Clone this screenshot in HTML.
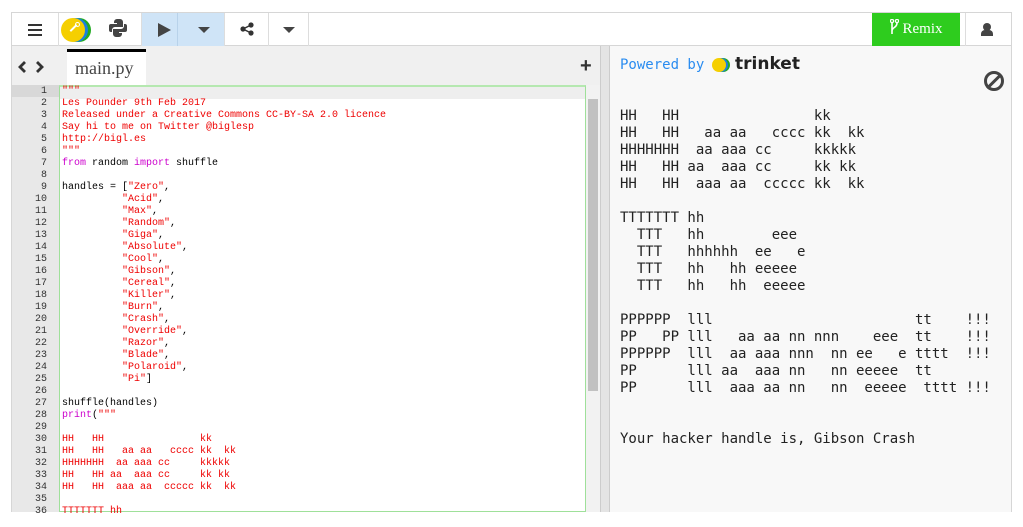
<!DOCTYPE html>
<html><head><meta charset="utf-8">
<style>
*{margin:0;padding:0;box-sizing:border-box}
body{width:1023px;height:527px;background:#fff;position:relative;overflow:hidden;font-family:"Liberation Sans",sans-serif}
.frame{position:absolute;left:11px;top:12px;width:1001px;height:500px;border:1px solid #d6d6d6}
.tb{position:absolute;left:0;top:0;width:999px;height:33px;border-bottom:1px solid #d6d6d6;background:#fff}
.tb .b{position:absolute;top:0;height:33px;border-right:1px solid #ddd}
.tabbar{position:absolute;left:0;top:33px;width:588px;height:39px;background:#f0f0f0}
.gut{position:absolute;left:0;top:72px;width:47px;height:427px;background:#e8e8e8}
.code{position:absolute;left:47px;top:72px;width:527px;height:427px;border:1px solid #9fe09a;border-top:2px solid #b5e8b0;background:#fff;overflow:hidden}
.ln{position:absolute;left:0;top:73px;width:35px;font:10px/12px "Liberation Mono",monospace;color:#333;text-align:right;white-space:pre}
.src{position:absolute;left:50px;top:73px;font:10px/12px "Liberation Mono",monospace;white-space:pre;color:#000}
.s{color:#e00}.k{color:#c0c}
.sb{position:absolute;left:574px;top:72px;width:14px;height:427px;background:#f2f2f2}
.split{position:absolute;left:588px;top:33px;width:10px;height:466px;background:#e4e4e4;border-left:1px solid #ccc;border-right:1px solid #ccc}
.out{position:absolute;left:598px;top:33px;width:401px;height:466px;background:#f8f8f8}
.o{position:absolute;left:10px;top:62px;font:14px/17px "DejaVu Sans Mono",monospace;white-space:pre;color:#222}
</style></head><body>
<div class="frame">
<div class="tb">
 <div class="b" style="left:0;width:47px"><div style="position:absolute;left:16px;top:11px;width:14px;height:2px;background:#333;box-shadow:0 5px #333,0 10px #333"></div></div>
 <div class="b" style="left:47px;width:83px">
  <div style="position:absolute;left:8px;top:5px;width:24px;height:24px;border-radius:50%;background:#2a2"></div>
  <div style="position:absolute;left:5px;top:5px;width:24px;height:24px;border-radius:50%;background:#1a7fe0"></div>
  <div style="position:absolute;left:2px;top:5px;width:24px;height:24px;border-radius:50%;background:#f5cf00"></div>
  <div style="position:absolute;left:10px;top:14px;width:9px;height:2px;background:#fff;transform:rotate(-45deg)"></div>
  <div style="position:absolute;left:16px;top:9px;width:5px;height:5px;border:1.5px solid #fff;border-radius:50%"></div>
  <svg style="position:absolute;left:49px;top:5px" width="20" height="20" viewBox="0 0 20 20"><path d="M9 1h3a3 3 0 0 1 3 3v5H7a3 3 0 0 0-3 3v2H3a2 2 0 0 1-2-2V8a2 2 0 0 1 2-2h6V5H6V4a3 3 0 0 1 3-3z" fill="#444"/><path d="M11 19H8a3 3 0 0 1-3-3v-5h8a3 3 0 0 0 3-3V6h1a2 2 0 0 1 2 2v4a2 2 0 0 1-2 2h-6v1h3v1a3 3 0 0 1-3 3z" fill="#444"/></svg>
 </div>
 <div class="b" style="left:130px;width:83px;background:#cfe4f7"><div style="position:absolute;left:16px;top:10px;border-left:13px solid #444;border-top:7px solid transparent;border-bottom:7px solid transparent"></div><div style="position:absolute;left:35px;top:0;width:1px;height:33px;background:#b8d2ea"></div><div style="position:absolute;left:56px;top:14px;border-top:6px solid #444;border-left:6px solid transparent;border-right:6px solid transparent"></div></div>
 <div class="b" style="left:213px;width:44px"><svg style="position:absolute;left:15px;top:9px" width="14" height="14"><circle cx="11" cy="3" r="2.6" fill="#333"/><circle cx="3" cy="7" r="2.6" fill="#333"/><circle cx="11" cy="11" r="2.6" fill="#333"/><path d="M11 3L3 7L11 11" stroke="#333" stroke-width="1.5" fill="none"/></svg></div>
 <div class="b" style="left:257px;width:40px"><div style="position:absolute;left:14px;top:14px;border-top:6px solid #444;border-left:6px solid transparent;border-right:6px solid transparent"></div></div>
 <div style="position:absolute;left:860px;top:0;width:88px;height:33px;background:#2ecc1e;color:#fff;font:15px/33px 'Liberation Serif',serif;text-align:center"><svg width="9" height="16" style="vertical-align:-2px;margin-right:4px"><circle cx="2" cy="2" r="1.6" fill="none" stroke="#fff" stroke-width="1.3"/><circle cx="7" cy="2" r="1.6" fill="none" stroke="#fff" stroke-width="1.3"/><path d="M2 4v11M7 4c0 5-5 4-5 8" stroke="#fff" stroke-width="1.6" fill="none"/></svg>Remix</div>
 <div style="position:absolute;left:953px;top:0;width:46px;height:33px;border-left:1px solid #ddd"><div style="position:absolute;left:17px;top:10px;width:8px;height:8px;border-radius:50%;background:#444"></div><div style="position:absolute;left:15px;top:17px;width:12px;height:6px;border-radius:4px 4px 0 0;background:#444"></div></div>
</div>
<div class="tabbar">
 <svg style="position:absolute;left:5px;top:14px" width="30" height="14"><path d="M8 2L3 7L8 12M20 2L25 7L20 12" stroke="#333" stroke-width="2.8" fill="none"/></svg>
 <div style="position:absolute;left:55px;top:3px;width:79px;height:36px;background:#fff;border-top:3px solid #000;font:18px/32px 'Liberation Serif',serif;color:#444;padding-left:8px">main.py</div>
 <div style="position:absolute;left:568px;top:10px;font:bold 20px/20px 'Liberation Sans';color:#333">+</div>
</div>
<div class="gut"></div>
<div style="position:absolute;left:0;top:72px;width:47px;height:12px;background:#d8d8d8"></div>
<div class="code"><div style="position:absolute;left:0;top:0;width:527px;height:12px;background:#eee"></div></div>
<div class="ln">1
2
3
4
5
6
7
8
9
10
11
12
13
14
15
16
17
18
19
20
21
22
23
24
25
26
27
28
29
30
31
32
33
34
35
36</div>
<div class="src"><span class="s">"""
Les Pounder 9th Feb 2017
Released under a Creative Commons CC-BY-SA 2.0 licence
Say hi to me on Twitter @biglesp
http://bigl.es
"""</span>
<span class="k">from</span> random <span class="k">import</span> shuffle

handles = [<span class="s">"Zero"</span>,
          <span class="s">"Acid"</span>,
          <span class="s">"Max"</span>,
          <span class="s">"Random"</span>,
          <span class="s">"Giga"</span>,
          <span class="s">"Absolute"</span>,
          <span class="s">"Cool"</span>,
          <span class="s">"Gibson"</span>,
          <span class="s">"Cereal"</span>,
          <span class="s">"Killer"</span>,
          <span class="s">"Burn"</span>,
          <span class="s">"Crash"</span>,
          <span class="s">"Override"</span>,
          <span class="s">"Razor"</span>,
          <span class="s">"Blade"</span>,
          <span class="s">"Polaroid"</span>,
          <span class="s">"Pi"</span>]

shuffle(handles)
<span class="k">print</span>(<span class="s">"""

HH   HH                kk
HH   HH   aa aa   cccc kk  kk
HHHHHHH  aa aaa cc     kkkkk
HH   HH aa  aaa cc     kk kk
HH   HH  aaa aa  ccccc kk  kk

TTTTTTT hh</span></div>
<div class="sb"><div style="position:absolute;left:2px;top:14px;width:10px;height:292px;background:#c1c1c1"></div></div>
<div class="split"></div>
<div class="out">
 <div style="position:absolute;left:10px;top:11px;font:14px/16px 'DejaVu Sans Mono',monospace;color:#2a8cf0">Powered by</div>
 <div style="position:absolute;left:106px;top:12px;width:14px;height:14px;border-radius:50%;background:#2a2"></div>
 <div style="position:absolute;left:104px;top:12px;width:14px;height:14px;border-radius:50%;background:#1a7fe0"></div>
 <div style="position:absolute;left:102px;top:12px;width:14px;height:14px;border-radius:50%;background:#f5cf00"></div>
 <div style="position:absolute;left:125px;top:8px;font:bold 17px/20px 'DejaVu Sans',sans-serif;color:#222">trinket</div>
 <div style="position:absolute;left:374px;top:25px;width:20px;height:20px;border:3px solid #444;border-radius:50%"><div style="position:absolute;left:5px;top:-1px;width:3px;height:18px;background:#444;transform:rotate(45deg)"></div></div>
 <div class="o">HH   HH                kk
HH   HH   aa aa   cccc kk  kk
HHHHHHH  aa aaa cc     kkkkk
HH   HH aa  aaa cc     kk kk
HH   HH  aaa aa  ccccc kk  kk

TTTTTTT hh
  TTT   hh        eee
  TTT   hhhhhh  ee   e
  TTT   hh   hh eeeee
  TTT   hh   hh  eeeee

PPPPPP  lll                        tt    !!!
PP   PP lll   aa aa nn nnn    eee  tt    !!!
PPPPPP  lll  aa aaa nnn  nn ee   e tttt  !!!
PP      lll aa  aaa nn   nn eeeee  tt
PP      lll  aaa aa nn   nn  eeeee  tttt !!!


Your hacker handle is, Gibson Crash</div>
</div>
</div>
</body></html>
